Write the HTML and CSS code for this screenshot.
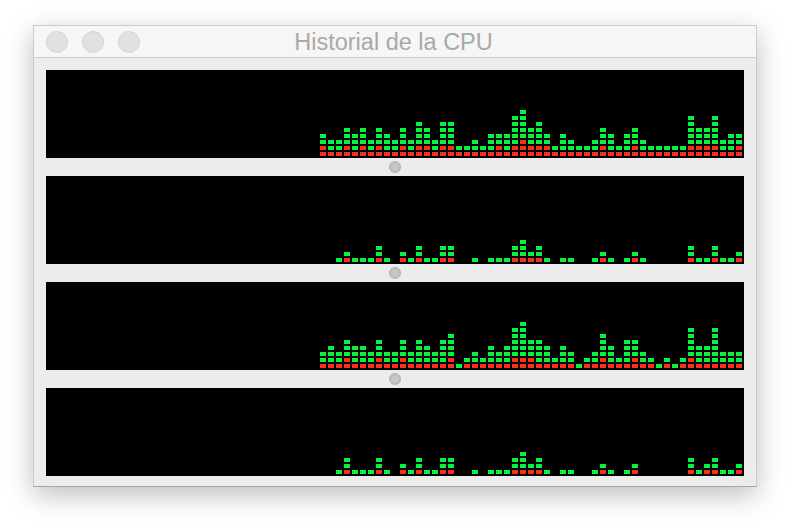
FILE: index.html
```html
<!DOCTYPE html>
<html lang="es">
<head>
<meta charset="utf-8">
<title>Historial de la CPU</title>
<link rel="stylesheet" href="styles.css">
</head>
<body>
<main class="window">
  <header class="titlebar">
    <div class="lights">
      <span class="light"></span>
      <span class="light"></span>
      <span class="light"></span>
    </div>
    <h1 class="title">Historial de la CPU</h1>
    <div class="titlebar-spacer"></div>
  </header>
  <section class="content" id="content"></section>
</main>
<script src="app.js"></script>
</body>
</html>
```
FILE: styles.css
```css
* { box-sizing: border-box; }
html, body { margin: 0; height: 100%; background: #fff; overflow: hidden; }
body { padding: 25px 0 0 33px; font-family: "Liberation Sans", Arial, sans-serif; }

.window {
  width: 724px;
  height: 462px;
  border: 1px solid #cbcbcb;
  border-bottom-color: #a6a6a6;
  background: #ececec;
  box-shadow: 0 8px 26px rgba(0, 0, 0, 0.26);
}

.titlebar {
  display: grid;
  grid-template-columns: 1fr auto 1fr;
  align-items: center;
  height: 32px;
  padding: 0 12px;
  background: #f6f6f6;
  border-bottom: 1px solid #cdcdcd;
}

.lights { display: flex; gap: 14px; padding-top: 1px; }

.light {
  width: 22px;
  height: 22px;
  border-radius: 50%;
  background: #e1e1e1;
  border: 1px solid #d3d3d3;
}

.title {
  margin: 2px 3px 0 0;
  font-size: 23.5px;
  font-weight: 400;
  line-height: 29px;
  color: #a9a9a9;
  white-space: nowrap;
}

.content { padding: 12px 12px 10px; }

.chart {
  display: flex;
  align-items: flex-end;
  gap: 2px;
  height: 88px;
  padding: 0 0 2px 274px;
  background: #000;
}

.col {
  display: flex;
  flex-direction: column-reverse;
  gap: 2px;
  width: 6px;
  flex: none;
}

.cell { height: 4px; background: #05f43e; }
.cell.hot { background: #ff2d1e; }

.splitter {
  display: flex;
  align-items: center;
  justify-content: center;
  height: 18px;
}

.knob {
  width: 12px;
  height: 12px;
  border-radius: 50%;
  background: radial-gradient(circle, #c6c6c6 40%, #b4b4b4 100%);
  border: 1px solid #b0b0b0;
}
```
FILE: app.js
```js
// Each series: one "height:red" pair per column, oldest first.
var series = [
  "4:2 3:1 3:1 5:2 4:1 5:2 3:1 5:2 4:1 3:1 5:2 3:1 6:2 5:2 3:1 6:2 6:2 2:1 2:1 3:1 2:1 4:1 4:2 4:1 7:2 8:3 5:2 6:2 4:2 2:1 4:1 3:1 2:1 2:1 3:1 5:2 4:1 2:1 4:1 5:2 3:1 2:1 2:1 2:1 2:1 2:1 7:2 5:2 5:2 7:2 3:1 4:1 4:2",
  "0:0 0:0 1:0 2:1 1:0 1:0 1:0 3:1 1:0 0:0 2:1 1:0 3:1 1:0 1:0 3:1 3:1 0:0 0:0 1:0 0:0 1:0 1:0 1:0 3:1 4:1 2:1 3:1 1:0 0:0 1:0 1:0 0:0 0:0 1:0 2:1 1:0 0:0 1:0 2:1 1:0 0:0 0:0 0:0 0:0 0:0 3:1 1:0 1:0 3:1 1:0 1:0 2:1",
  "3:1 4:1 3:1 5:2 4:1 4:1 3:1 5:2 3:1 3:1 5:2 3:1 5:1 4:1 3:1 5:1 6:2 1:0 2:1 3:1 2:1 4:1 3:1 4:1 7:2 8:2 5:2 5:1 4:1 2:1 4:1 3:1 1:0 2:1 3:1 6:2 4:1 2:1 5:1 5:2 3:1 2:1 1:0 2:1 1:0 2:1 7:2 4:1 4:1 7:1 3:1 3:1 3:1",
  "0:0 0:0 1:0 3:1 1:0 1:0 1:0 3:1 1:0 0:0 2:1 1:0 3:1 1:0 1:0 3:1 3:1 0:0 0:0 1:0 0:0 1:0 1:0 1:0 3:1 4:1 2:1 3:1 1:0 0:0 1:0 1:0 0:0 0:0 1:0 2:1 1:0 0:0 1:0 2:1 0:0 0:0 0:0 0:0 0:0 0:0 3:1 1:0 2:1 3:1 1:0 1:0 2:1"
];

var content = document.getElementById("content");

series.forEach(function (data, index) {
  var chart = document.createElement("div");
  chart.className = "chart";
  data.split(" ").forEach(function (pair) {
    var parts = pair.split(":");
    var col = document.createElement("div");
    col.className = "col";
    for (var i = 0; i < +parts[0]; i++) {
      var cell = document.createElement("div");
      cell.className = i < +parts[1] ? "cell hot" : "cell";
      col.appendChild(cell);
    }
    chart.appendChild(col);
  });
  content.appendChild(chart);
  if (index < series.length - 1) {
    var splitter = document.createElement("div");
    splitter.className = "splitter";
    var knob = document.createElement("span");
    knob.className = "knob";
    splitter.appendChild(knob);
    content.appendChild(splitter);
  }
});
```
